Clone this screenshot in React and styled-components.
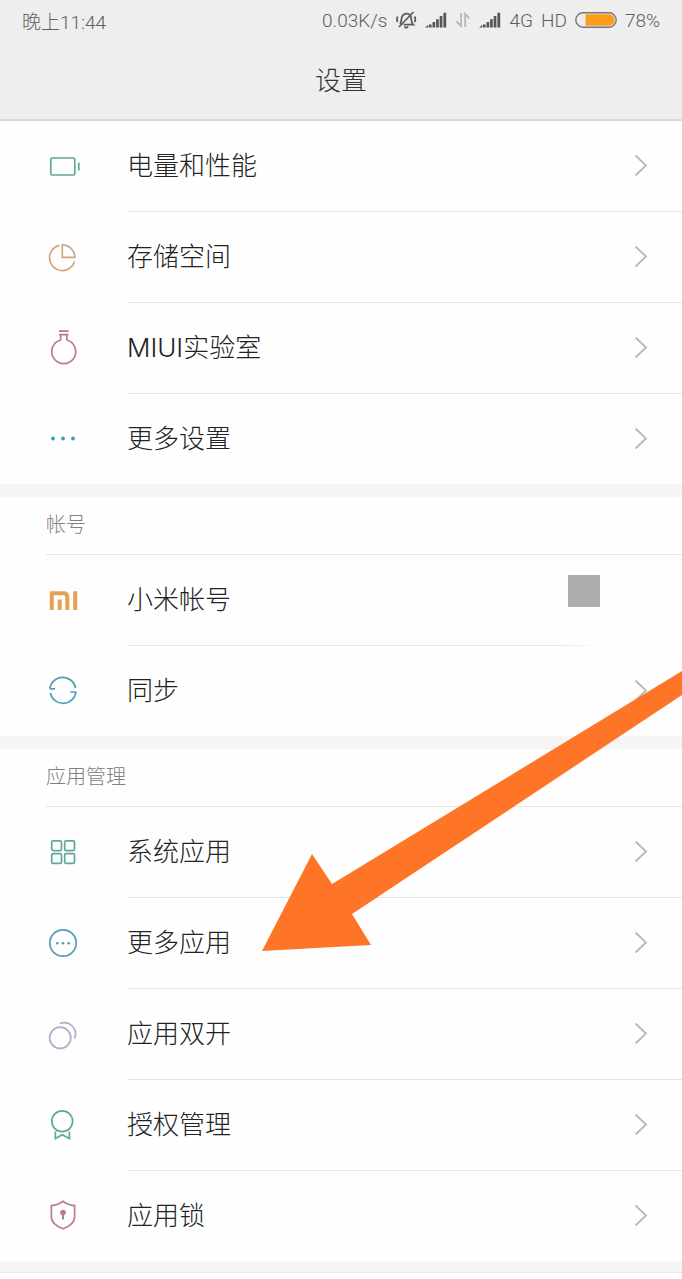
import React from 'react';
import { styled, createGlobalStyle } from 'styled-components';

const TEAL = '#5fa898';
const BLUE = '#4f9fb5';
const ROSE = '#bd7a8a';
const SAND = '#cfa783';
const LILAC = '#b5a9cc';

const BatteryIcon = () => (
  <Icon viewBox="0 0 36 36" stroke={TEAL}>
    <rect x="5.8" y="10" width="24" height="17" rx="1.5" />
    <path d="M33.8 14.5v8" />
  </Icon>
);

const StorageIcon = () => (
  <Icon viewBox="0 0 36 36" stroke={SAND}>
    <path d="M14.5 6.3A12.8 12.8 0 1 0 29.6 22.5" />
    <path d="M17.3 5.8v12.6h12.6A12.6 12.6 0 0 0 17.3 5.8z" />
  </Icon>
);

const FlaskIcon = () => (
  <Icon viewBox="0 0 36 36" stroke={ROSE}>
    <path d="M14 1.2h9.5M14 4.6h9.5M15.7 4.6v5.6M21.8 4.6v5.6" />
    <path d="M15.7 10A12 12 0 1 0 21.8 10" />
  </Icon>
);

const DotsIcon = () => (
  <Icon viewBox="0 0 36 36" stroke="none" fill="#3d9cc0">
    <circle cx="8" cy="18.5" r="1.9" />
    <circle cx="18" cy="18.5" r="1.9" />
    <circle cx="28" cy="18.5" r="1.9" />
  </Icon>
);

const MiIcon = () => (
  <Icon viewBox="0 0 36 36" stroke="#e5a254" strokeWidth="4">
    <path d="M6.8 28V11.3H18.5Q22.3 11.3 22.3 15V28M14.7 17.5V28M30.2 9.3V28" />
  </Icon>
);

const SyncIcon = () => (
  <Icon viewBox="0 0 36 36" stroke={BLUE}>
    <path d="M4.9 16.8H10M4.9 16.8A13 13 0 0 1 30.6 16" />
    <path d="M31 20H25.5M31 20A13 13 0 0 1 5.4 21" />
  </Icon>
);

const GridIcon = () => (
  <Icon viewBox="0 0 36 36" stroke={TEAL}>
    <rect x="6.7" y="6.8" width="9.8" height="9.8" rx="1.5" />
    <rect x="19.7" y="6.8" width="9.8" height="9.8" rx="1.5" />
    <rect x="6.7" y="19.6" width="9.8" height="9.8" rx="1.5" />
    <rect x="19.7" y="19.6" width="9.8" height="9.8" rx="1.5" />
  </Icon>
);

const MoreAppsIcon = () => (
  <Icon viewBox="0 0 36 36" stroke={BLUE}>
    <circle cx="18" cy="18" r="13.2" />
    <g fill={BLUE} stroke="none">
      <circle cx="12.3" cy="18.2" r="1.3" />
      <circle cx="18" cy="18.2" r="1.3" />
      <circle cx="23.7" cy="18.2" r="1.3" />
    </g>
  </Icon>
);

const DualIcon = () => (
  <Icon viewBox="0 0 36 36" stroke={LILAC}>
    <circle cx="15.2" cy="21.8" r="10.6" />
    <path d="M14.8 7.8A11 11 0 0 1 29.4 22.4" />
  </Icon>
);

const MedalIcon = () => (
  <Icon viewBox="0 0 36 36" stroke={TEAL}>
    <circle cx="17.2" cy="14.2" r="10.4" />
    <path d="M10.4 24.5V31.5L17.2 27.8L24.4 31.5V24.5" />
  </Icon>
);

const ShieldIcon = () => (
  <Icon viewBox="0 0 36 36" stroke={ROSE}>
    <path d="M18 4.2Q23 8 29.6 8.6V20Q29.6 27.5 18 31.8Q6.4 27.5 6.4 20V8.6Q13 8 18 4.2z" />
    <circle cx="18" cy="15.6" r="2.8" fill={ROSE} stroke="none" />
    <path d="M18 16v6.5" strokeWidth="2" />
  </Icon>
);

const MuteIcon = () => (
  <StatusSvg width="22" height="20" viewBox="0 0 22 20">
    <path d="M5 14.5C6.6 13 6 8.5 7.2 6.4C8.3 4.4 10 3.6 11.5 3.6C15 3.6 16.2 6.6 16.3 9.2C16.4 11.8 17 13.6 18.2 14.6H8.5" />
    <path d="M4 17L18.4 2M9.5 16.5Q11.2 19 13 16.5M2.6 6.5Q1.4 9.5 2.6 12M19.6 6.5Q21 9.5 19.6 12" />
  </StatusSvg>
);

const SignalIcon = () => (
  <StatusSvg width="22" height="16" viewBox="0 0 22 16">
    <path
      stroke="none"
      fill="#555"
      d="M0 15.5l3.2-2.4v2.4zM3.9 12.4h2.7v3.1H3.9zM7.5 10h2.7v5.5H7.5zM11.1 7.2h2.7v8.3h-2.7zM14.7 4h2.7v11.5h-2.7zM18.4.8h2.8v14.7h-2.8z"
    />
  </StatusSvg>
);

const DataIcon = () => (
  <StatusSvg width="16" height="16" viewBox="0 0 16 16">
    <path stroke="#b8b8b8" d="M6 1v13L1.5 9.5M10.2 15V2L14.5 6.5" />
  </StatusSvg>
);

const BatteryLevel = () => (
  <StatusSvg width="42" height="16" viewBox="0 0 42 16">
    <rect x="0.8" y="0.8" width="40.4" height="14.4" rx="7.2" stroke="#777" strokeWidth="1.4" />
    <path stroke="none" fill="#fc9d1e" d="M10.5 2.3H34a5.7 5.7 0 0 1 0 11.4H10.5z" />
  </StatusSvg>
);

const groups = [
  {
    items: [
      { label: '电量和性能', icon: <BatteryIcon /> },
      { label: '存储空间', icon: <StorageIcon /> },
      { label: 'MIUI实验室', icon: <FlaskIcon /> },
      { label: '更多设置', icon: <DotsIcon /> },
    ],
  },
  {
    title: '帐号',
    items: [
      { label: '小米帐号', icon: <MiIcon />, masked: true },
      { label: '同步', icon: <SyncIcon /> },
    ],
  },
  {
    title: '应用管理',
    items: [
      { label: '系统应用', icon: <GridIcon /> },
      { label: '更多应用', icon: <MoreAppsIcon /> },
      { label: '应用双开', icon: <DualIcon /> },
      { label: '授权管理', icon: <MedalIcon /> },
      { label: '应用锁', icon: <ShieldIcon /> },
    ],
  },
];

const SettingRow = ({ item }) => (
  <Row type="button">
    <IconBox>{item.icon}</IconBox>
    <RowBody $masked={item.masked}>
      <Label>{item.label}</Label>
      {item.masked ? (
        <Mask />
      ) : (
        <Chevron viewBox="0 0 14 24">
          <path d="M1.5 1.5L12 11.5L1.5 21.5" />
        </Chevron>
      )}
    </RowBody>
  </Row>
);

const App = () => {
  return (
    <Page>
      <GlobalStyle />
      <Header>
        <StatusBar>
          <span>晚上11:44</span>
          <StatusRight>
            <span>0.03K/s</span>
            <MuteIcon />
            <SignalIcon />
            <DataIcon />
            <SignalIcon />
            <span>4G</span>
            <span>HD</span>
            <BatteryLevel />
            <span>78%</span>
          </StatusRight>
        </StatusBar>
        <Title>设置</Title>
      </Header>
      <Main>
        {groups.map((group, index) => (
          <Group key={index}>
            {group.title && <GroupTitle>{group.title}</GroupTitle>}
            {group.items.map((item) => (
              <SettingRow key={item.label} item={item} />
            ))}
          </Group>
        ))}
      </Main>
      <Arrow viewBox="0 0 420 281">
        <path d="M0 280L50 183L70 213L420 0V24L90 243L109 274z" />
      </Arrow>
    </Page>
  );
};

export default App;

const GlobalStyle = createGlobalStyle`
  * {
    box-sizing: border-box;
  }

  body {
    margin: 0;
    background-color: #fefefe;
    font-family: Roboto, "Noto Sans CJK SC", sans-serif;
    font-weight: 300;
  }
`;

const Page = styled.div`
  position: relative;
  overflow: hidden;
  min-height: 100vh;
`;

const Header = styled.header`
  background-color: #eee;
  border-bottom: 2px solid #dadada;
`;

const StatusBar = styled.div`
  display: flex;
  justify-content: space-between;
  align-items: center;
  height: 40px;
  padding: 0 22px;
  font-size: 19px;
  color: #606060;
`;

const StatusRight = styled.div`
  display: flex;
  align-items: center;
  gap: 8px;
`;

const StatusSvg = styled.svg`
  fill: none;
  stroke: #5c5c5c;
  stroke-width: 1.8;
`;

const Title = styled.h1`
  margin: 0;
  height: 79px;
  font-size: 26px;
  line-height: 82px;
  font-weight: 300;
  text-align: center;
  color: #333;
`;

const Main = styled.main`
  border-bottom: 1px solid #e8e8e8;
`;

const Group = styled.section`
  border-bottom: 13px solid #f5f5f5;

  &:last-child {
    border-bottom-width: 11px;
  }
`;

const GroupTitle = styled.h2`
  margin: 0 0 0 46px;
  height: 58px;
  border-bottom: 1px solid #e4e4e4;
  font-size: 20px;
  line-height: 56px;
  font-weight: 300;
  color: #808080;
`;

const IconBox = styled.span`
  display: flex;
  width: 82px;
  padding-bottom: 2px;
`;

const Icon = styled.svg`
  width: 36px;
  height: 36px;
  fill: ${({ fill }) => fill || 'none'};
  stroke-width: ${({ strokeWidth }) => strokeWidth || 1.7};
`;

const RowBody = styled.span`
  flex: 1;
  display: flex;
  justify-content: space-between;
  align-items: center;
  height: 91px;
  padding-right: ${({ $masked }) => ($masked ? '82px' : '34px')};
  border-bottom: 1px solid #e4e4e4;
  ${({ $masked }) =>
    $masked && 'border-image: linear-gradient(to right, #e4e4e4 75%, transparent 87%) 1;'}
`;

const Row = styled.button`
  display: flex;
  align-items: center;
  width: 100%;
  padding: 0 0 0 45px;
  border: none;
  background: none;
  font: inherit;
  text-align: left;
  cursor: pointer;

  &:last-child ${RowBody} {
    height: 90px;
    border-bottom: none;
  }
`;

const Label = styled.span`
  font-family: Inter, "Noto Sans CJK SC", sans-serif;
  font-size: 26px;
  line-height: 40px;
  color: #222;
`;

const Mask = styled.span`
  width: 32px;
  height: 32px;
  margin-bottom: 18px;
  background-color: #adadad;
`;

const Chevron = styled.svg`
  width: 14px;
  height: 24px;
  fill: none;
  stroke: #b8b8b8;
  stroke-width: 1.8;
`;

const Arrow = styled.svg`
  position: absolute;
  top: 671px;
  left: 262px;
  width: 420px;
  height: 281px;
  fill: #ff7527;
  pointer-events: none;
`;
